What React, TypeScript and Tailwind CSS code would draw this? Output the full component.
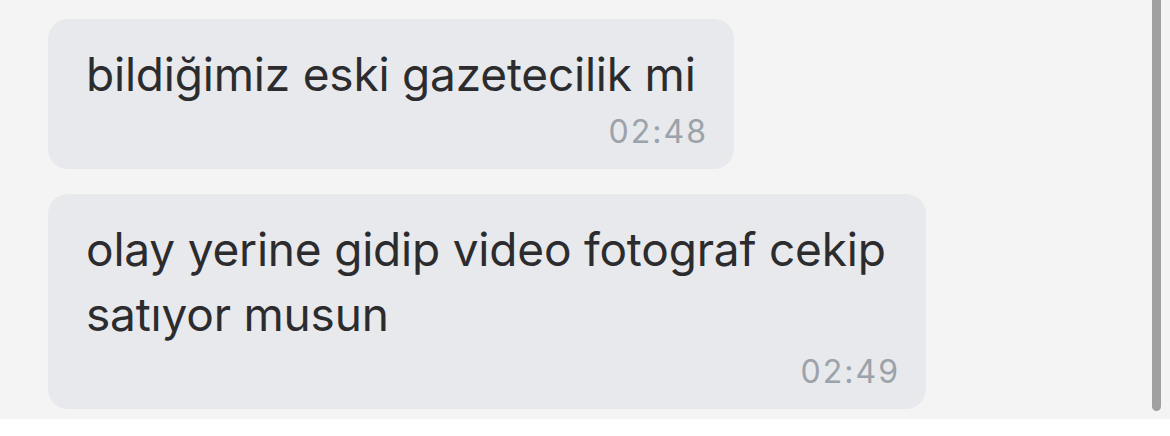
import React from 'react';

const messages = [
  { text: 'bildiğimiz eski gazetecilik mi', time: '02:48', width: 'w-[686px]' },
  { text: 'olay yerine gidip video fotograf cekip satıyor musun', time: '02:49', width: 'w-[878px]' },
];

const App = () => {
  return (
    <div className="w-[1170px] h-[436px] bg-white font-['Inter','Noto_Sans',sans-serif]">
      <div className="relative h-[419px] bg-[#f4f4f4] pl-[48px] pt-[19px] flex flex-col gap-[25px]">
        {messages.map((m) => (
          <div
            key={m.time}
            className={`${m.width} rounded-[20px] bg-[#e7e9ec] pl-[38px] pr-[26px] pt-[23px] pb-[17px]`}
          >
            <p className="text-[46px] leading-[65px] text-[#2c2c2e] tracking-[-0.2px]">{m.text}</p>
            <div className="mt-[5px] text-right text-[32px] leading-[40px] text-[#9ca2aa] tracking-[2px]">
              {m.time}
            </div>
          </div>
        ))}

        {/* scrollbar */}
        <div className="absolute right-[9px] top-0 h-[411px] w-[9px] rounded-b-full bg-[#a0a0a0]" />
      </div>
    </div>
  );
};

export default App;
